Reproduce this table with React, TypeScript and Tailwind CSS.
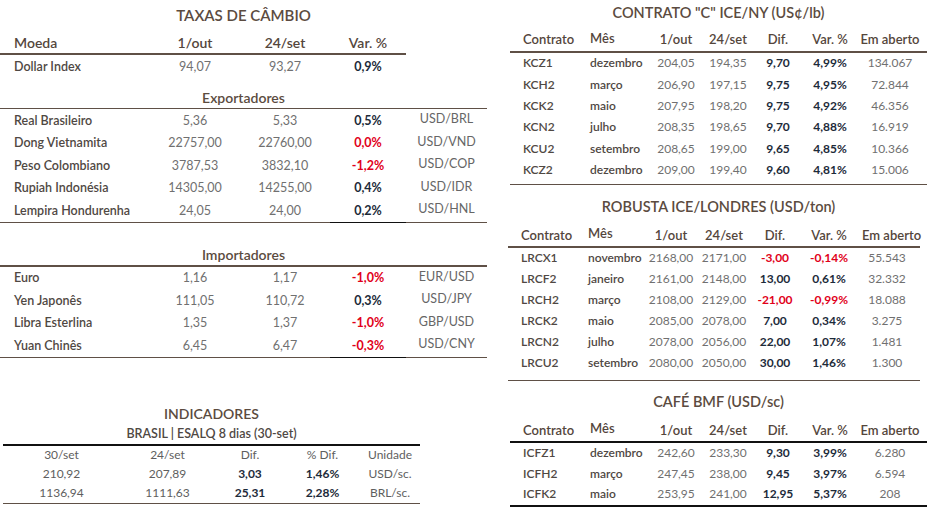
import type { ReactNode } from "react";

type FxRow = { name: string; a: string; b: string; v: string; unit: string; red?: boolean };
type FutRow = [string, string, string, string, string, string, string];

const exportadores: FxRow[] = [
  { name: "Real Brasileiro", a: "5,36", b: "5,33", v: "0,5%", unit: "USD/BRL" },
  { name: "Dong Vietnamita", a: "22757,00", b: "22760,00", v: "0,0%", unit: "USD/VND", red: true },
  { name: "Peso Colombiano", a: "3787,53", b: "3832,10", v: "-1,2%", unit: "USD/COP", red: true },
  { name: "Rupiah Indonésia", a: "14305,00", b: "14255,00", v: "0,4%", unit: "USD/IDR" },
  { name: "Lempira Hondurenha", a: "24,05", b: "24,00", v: "0,2%", unit: "USD/HNL" },
];

const importadores: FxRow[] = [
  { name: "Euro", a: "1,16", b: "1,17", v: "-1,0%", unit: "EUR/USD", red: true },
  { name: "Yen Japonês", a: "111,05", b: "110,72", v: "0,3%", unit: "USD/JPY" },
  { name: "Libra Esterlina", a: "1,35", b: "1,37", v: "-1,0%", unit: "GBP/USD", red: true },
  { name: "Yuan Chinês", a: "6,45", b: "6,47", v: "-0,3%", unit: "USD/CNY", red: true },
];

const arabica: FutRow[] = [
  ["KCZ1", "dezembro", "204,05", "194,35", "9,70", "4,99%", "134.067"],
  ["KCH2", "março", "206,90", "197,15", "9,75", "4,95%", "72.844"],
  ["KCK2", "maio", "207,95", "198,20", "9,75", "4,92%", "46.356"],
  ["KCN2", "julho", "208,35", "198,65", "9,70", "4,88%", "16.919"],
  ["KCU2", "setembro", "208,65", "199,00", "9,65", "4,85%", "10.366"],
  ["KCZ2", "dezembro", "209,00", "199,40", "9,60", "4,81%", "15.006"],
];

const robusta: FutRow[] = [
  ["LRCX1", "novembro", "2168,00", "2171,00", "-3,00", "-0,14%", "55.543"],
  ["LRCF2", "janeiro", "2161,00", "2148,00", "13,00", "0,61%", "32.332"],
  ["LRCH2", "março", "2108,00", "2129,00", "-21,00", "-0,99%", "18.088"],
  ["LRCK2", "maio", "2085,00", "2078,00", "7,00", "0,34%", "3.275"],
  ["LRCN2", "julho", "2078,00", "2056,00", "22,00", "1,07%", "1.481"],
  ["LRCU2", "setembro", "2080,00", "2050,00", "30,00", "1,46%", "1.300"],
];

const bmf: FutRow[] = [
  ["ICFZ1", "dezembro", "242,60", "233,30", "9,30", "3,99%", "6.280"],
  ["ICFH2", "março", "247,45", "238,00", "9,45", "3,97%", "6.594"],
  ["ICFK2", "maio", "253,95", "241,00", "12,95", "5,37%", "208"],
];

const FX_COLS = "grid grid-cols-[150px_90px_90px_76px_81px]";
const KC_COLS = "grid grid-cols-[80px_62px_48px_56px_44px_60px_60px]";
const RC_COLS = "grid grid-cols-[80px_60px_46px_60px_42px_66px_50px]";

function Title({ children, className = "" }: { children: ReactNode; className?: string }) {
  return (
    <div className={`flex items-center justify-center font-semibold text-[#5b4b40] ${className}`}>
      {children}
    </div>
  );
}

function FxBody({ rows, darkEnd }: { rows: FxRow[]; darkEnd?: boolean }) {
  return (
    <div>
      {rows.map((r) => (
        <div key={r.name} className={`${FX_COLS} h-[22.5px] items-center pt-[2px] text-[12.5px]`}>
          <span className="pl-[14px] font-semibold text-[#4f4843]">{r.name}</span>
          <span className="text-center text-[#707070]">{r.a}</span>
          <span className="text-center text-[#707070]">{r.b}</span>
          <span className={`text-center font-bold ${r.red ? "text-[#e1001a]" : "text-[#1d2b3a]"}`}>{r.v}</span>
          <span className="-mt-[3px] text-center text-[#666]">{r.unit}</span>
        </div>
      ))}
      <div className="flex h-[1.5px]">
        <div className="w-[330px] bg-[#5f5046]" />
        <div className={`w-[76px] ${darkEnd ? "bg-[#111]" : "bg-[#5f5046]"}`} />
        <div className="flex-1 bg-[#5f5046]" />
      </div>
    </div>
  );
}

function Futures({ rows, cols, rowH, darkHead }: { rows: FutRow[]; cols: string; rowH: string; darkHead?: boolean }) {
  return (
    <div>
      <div className={`${cols} h-[22px] items-center text-[13px] font-semibold text-[#54463c]`}>
        <span className="pl-[13px]">Contrato</span>
        <span className="-mt-[3px]">Mês</span>
        <span className="text-center">1/out</span>
        <span className="text-center">24/set</span>
        <span className="text-center">Dif.</span>
        <span className="text-center">Var. %</span>
        <span className="whitespace-nowrap text-center">Em aberto</span>
      </div>
      <div className={`h-[1.5px] ${darkHead ? "bg-[#111]" : "bg-[#5f5046]"}`} />
      {rows.map((r) => {
        const neg = r[4].startsWith("-");
        return (
          <div key={r[0]} className={`${cols} ${rowH} items-center text-[12px]`}>
            <span className="pl-[13px] font-semibold text-[#4f4843]">{r[0]}</span>
            <span className="font-semibold text-[#4f4843]">{r[1]}</span>
            <span className="text-center text-[#707070]">{r[2]}</span>
            <span className="text-center text-[#707070]">{r[3]}</span>
            <span className={`text-center font-bold ${neg ? "text-[#e1001a]" : "text-[#1d2b3a]"}`}>{r[4]}</span>
            <span className={`text-center font-bold ${neg ? "text-[#e1001a]" : "text-[#1d2b3a]"}`}>{r[5]}</span>
            <span className="text-center text-[#707070]">{r[6]}</span>
          </div>
        );
      })}
    </div>
  );
}

export default function App() {
  return (
    <div className="flex h-[521px] w-[927px] overflow-hidden bg-white font-['Lato','Liberation_Sans',sans-serif]">
      {/* left column: câmbio + indicadores */}
      <div className="w-[487px] shrink-0">
        <Title className="h-[31px] pb-[1px] text-[15px]">TAXAS DE CÂMBIO</Title>
        <div className="w-[406px]">
          <div className="grid h-[22px] grid-cols-[150px_90px_90px_76px] items-center text-[14px] font-semibold text-[#54463c]">
            <span className="pl-[14px]">Moeda</span>
            <span className="text-center">1/out</span>
            <span className="text-center">24/set</span>
            <span className="text-center">Var. %</span>
          </div>
          <div className="h-[1.5px] bg-[#5f5046]" />
        </div>
        <div className={`${FX_COLS} h-[22px] items-center pt-[3px] text-[12.5px]`}>
          <span className="pl-[14px] font-semibold text-[#4f4843]">Dollar Index</span>
          <span className="text-center text-[#707070]">94,07</span>
          <span className="text-center text-[#707070]">93,27</span>
          <span className="text-center font-bold text-[#1d2b3a]">0,9%</span>
          <span />
        </div>

        <Title className="mt-[10px] h-[21px] text-[14px]">Exportadores</Title>
        <div className="h-[1.5px] bg-[#5f5046]" />
        <FxBody rows={exportadores} darkEnd />

        <Title className="mt-[21px] h-[21px] text-[14px]">Importadores</Title>
        <div className="h-[1.5px] bg-[#5f5046]" />
        <FxBody rows={importadores} darkEnd />

        <div className="mt-[46px] ml-[3px] w-[417px]">
          <Title className="h-[19px] text-[14px]">INDICADORES</Title>
          <div className="flex h-[21px] items-center justify-center pt-[2px] text-[12.5px] font-semibold text-[#4f4843]">
            BRASIL | ESALQ 8 dias (30-set)
          </div>
          <div className="h-[1.5px] bg-[#111]" />
          <div className="grid grid-cols-[117px_95px_70px_75px_60px] text-[12px] text-[#5e5e5e]">
            {["30/set", "24/set", "Dif.", "% Dif.", "Unidade"].map((h) => (
              <span key={h} className="flex h-[19px] items-center justify-center">
                {h}
              </span>
            ))}
            {[
              ["210,92", "207,89", "3,03", "1,46%", "USD/sc."],
              ["1136,94", "1111,63", "25,31", "2,28%", "BRL/sc."],
            ].map((r) =>
              r.map((c, i) => (
                <span
                  key={r[0] + i}
                  className={`flex h-[19px] items-center justify-center ${
                    i === 2 || i === 3 ? "font-bold text-[#1d2b3a]" : ""
                  }`}
                >
                  {c}
                </span>
              ))
            )}
          </div>
          <div className="h-[1.5px] bg-[#5f5046]" />
        </div>
      </div>

      {/* right column: futures */}
      <div className="ml-[23px] flex-1">
        <Title className="h-[29px] pb-[4px] text-[14.5px]">CONTRATO "C" ICE/NY (US¢/lb)</Title>
        <Futures rows={arabica} cols={KC_COLS} rowH="h-[21.4px]" />
        <div className="mt-[3px] h-[1.5px] bg-[#5f5046]" />

        <Title className="mt-[10px] h-[24px] text-[14.5px]">ROBUSTA ICE/LONDRES (USD/ton)</Title>
        <div className="-ml-[2px] mt-[5px] w-[412px]">
          <Futures rows={robusta} cols={RC_COLS} rowH="h-[21px]" />
          <div className="mt-[6px] h-[1.5px] bg-[#5f5046]" />
        </div>

        <Title className="mt-[9px] h-[24px] text-[14.5px]">CAFÉ BMF (USD/sc)</Title>
        <div className="mt-[5px]">
          <Futures rows={bmf} cols={KC_COLS} rowH="h-[20.5px]" darkHead />
          <div className="mt-[1px] h-[1.5px] bg-[#111]" />
        </div>
      </div>
    </div>
  );
}
